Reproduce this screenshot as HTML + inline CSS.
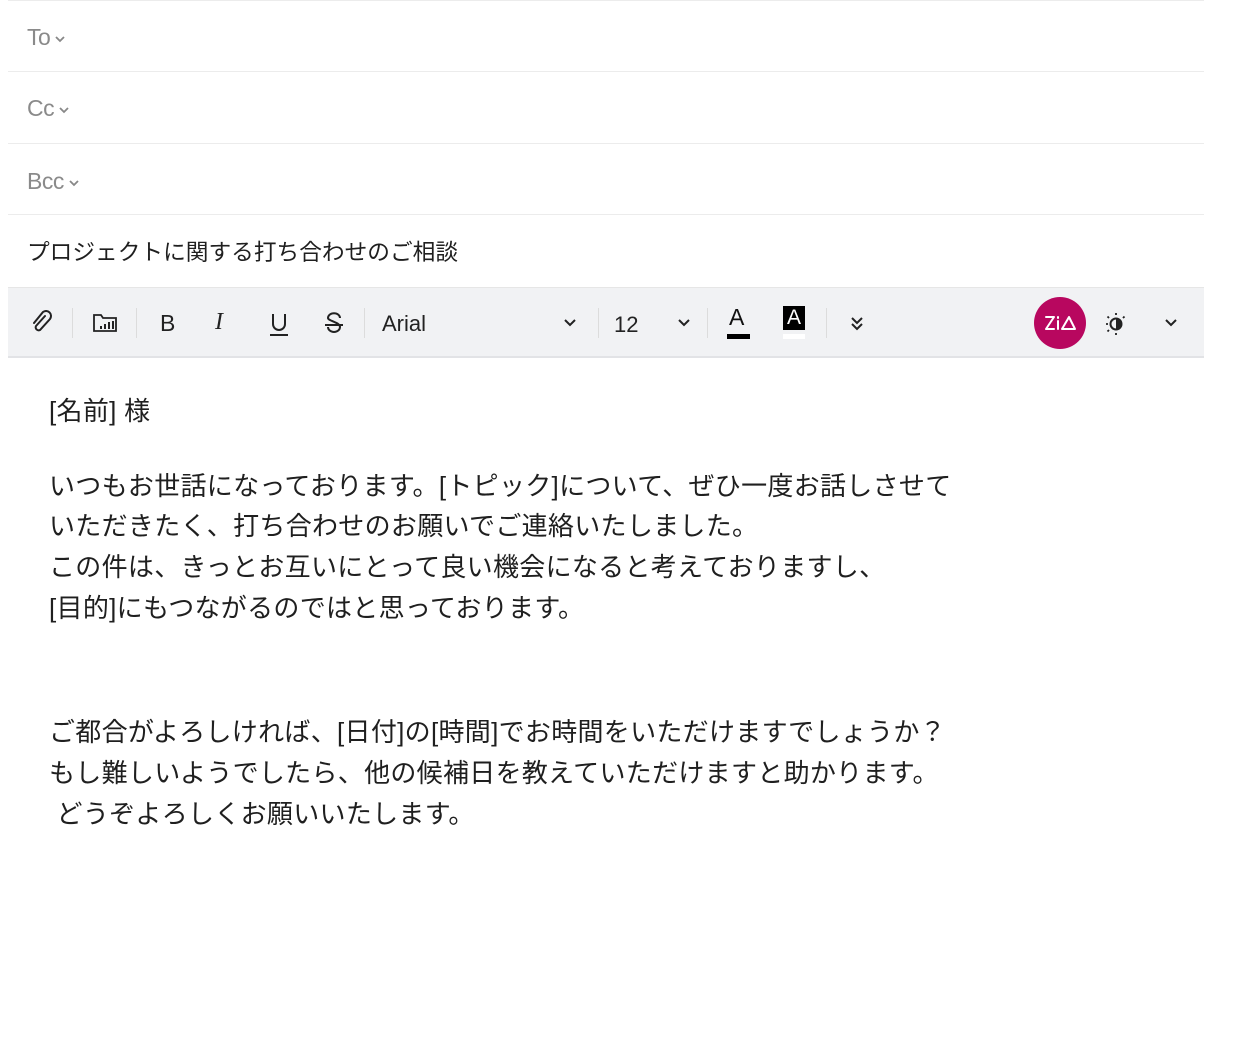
<!DOCTYPE html>
<html><head><meta charset="utf-8"><style>
*{margin:0;padding:0;box-sizing:border-box}
body{width:1236px;height:1060px;background:#fff;position:relative;overflow:hidden;font-family:"Liberation Sans","Noto Sans CJK JP",sans-serif;color:#1f1f1f}
.row{position:absolute;left:8px;width:1196px;border-top:1px solid #ececec}
.lbl{position:absolute;left:27px;font-size:23px;color:#8a8a8a;letter-spacing:-0.5px}
.lbl svg{vertical-align:middle;margin-left:4px}
.tb{position:absolute;left:8px;top:287px;width:1196px;height:71px;background:#f1f2f4;border-bottom:2px solid #e2e3e6;border-top:1px solid #e6e6e6}
.sep{position:absolute;top:20px;width:1px;height:30px;background:#dcdcdc}
.ic{position:absolute}
.t{position:absolute;left:49px;font-size:26px;white-space:nowrap;color:#1f1f1f;letter-spacing:0.3px}
</style></head><body>
<div class="row" style="top:0"></div>
<div class="lbl" style="top:24px">To<svg width="12" height="8" viewBox="0 0 12 8"><path d="M2 2l4 4 4-4" stroke="#888" stroke-width="1.8" fill="none"/></svg></div>
<div class="row" style="top:71px"></div>
<div class="lbl" style="top:95px">Cc<svg width="12" height="8" viewBox="0 0 12 8"><path d="M2 2l4 4 4-4" stroke="#888" stroke-width="1.8" fill="none"/></svg></div>
<div class="row" style="top:143px"></div>
<div class="lbl" style="top:168px">Bcc<svg width="12" height="8" viewBox="0 0 12 8"><path d="M2 2l4 4 4-4" stroke="#888" stroke-width="1.8" fill="none"/></svg></div>
<div class="row" style="top:214px"></div>
<div style="position:absolute;left:27px;top:234px;font-size:22.7px;color:#1f1f1f">プロジェクトに関する打ち合わせのご相談</div>

<div class="tb">
 <svg class="ic" style="left:22px;top:22px" width="24" height="26" viewBox="0 0 24 26"><path d="M15 6L6 16a3 3 0 0 0 4 4l10-11a5 5 0 0 0-7-7L4 13" stroke="#222" stroke-width="2" fill="none" stroke-linecap="round"/></svg>
 <div class="sep" style="left:64px"></div>
 <svg class="ic" style="left:84px;top:24px" width="26" height="22" viewBox="0 0 26 22"><path d="M2 19V3h7l2 3h13v13z" stroke="#222" stroke-width="1.8" fill="none"/><path d="M9 17v-3M13 17v-5M17 17v-7M21 17v-8" stroke="#222" stroke-width="2"/></svg>
 <div class="sep" style="left:128px"></div>
 <div class="ic" style="left:152px;top:22px;font-size:23px;color:#222">B</div>
 <div class="ic" style="left:207px;top:21px;font-size:24px;font-style:italic;font-family:'Liberation Serif',serif;color:#222">I</div>
 <svg class="ic" style="left:260px;top:24px" width="22" height="26" viewBox="0 0 22 26"><path d="M5 2v10a6 6 0 0 0 12 0V2" stroke="#222" stroke-width="2" fill="none"/><path d="M2 23h18" stroke="#222" stroke-width="2"/></svg>
 <svg class="ic" style="left:315px;top:24px" width="22" height="26" viewBox="0 0 22 26"><path d="M17 6a5 4 0 0 0-12 0c0 3 12 4 12 9a6 5 0 0 1-12 0" stroke="#222" stroke-width="2" fill="none"/><path d="M2 13h18" stroke="#222" stroke-width="2"/></svg>
 <div class="sep" style="left:356px"></div>
 <div class="ic" style="left:374px;top:23px;font-size:22px;color:#222">Arial</div>
 <svg class="ic" style="left:555px;top:30px" width="14" height="10" viewBox="0 0 14 10"><path d="M2 2l5 5 5-5" stroke="#222" stroke-width="2" fill="none"/></svg>
 <div class="sep" style="left:590px"></div>
 <div class="ic" style="left:606px;top:24px;font-size:22px;color:#222">12</div>
 <svg class="ic" style="left:669px;top:30px" width="14" height="10" viewBox="0 0 14 10"><path d="M2 2l5 5 5-5" stroke="#222" stroke-width="2" fill="none"/></svg>
 <div class="sep" style="left:699px"></div>
 <div class="ic" style="left:721px;top:16px;font-size:23px;color:#111">A</div>
 <div class="ic" style="left:719px;top:46px;width:23px;height:5px;background:#000"></div>
 <div class="ic" style="left:775px;top:18px;width:22px;height:24px;background:#000;color:#fff;font-size:21px;text-align:center;line-height:24px">A</div>
 <div class="ic" style="left:775px;top:46px;width:22px;height:5px;background:#fff"></div>
 <div class="sep" style="left:818px"></div>
 <svg class="ic" style="left:842px;top:28px" width="14" height="16" viewBox="0 0 14 16"><path d="M2 2l5 5 5-5M2 8l5 5 5-5" stroke="#222" stroke-width="2" fill="none"/></svg>
 <svg class="ic" style="left:1026px;top:9px" width="52" height="52" viewBox="0 0 52 52"><circle cx="26" cy="26" r="26" fill="#b8075f"/><path d="M12 20h8l-8 12h8M24 24v8M24 20v1M28 32l7-12 6 12z" stroke="#fff" stroke-width="2" fill="none" stroke-linejoin="round" stroke-linecap="round"/></svg>
 <svg class="ic" style="left:1096px;top:24px" width="26" height="24" viewBox="0 0 26 24"><circle cx="12" cy="12" r="5.5" stroke="#222" stroke-width="2" fill="none"/><path d="M12 6.5a5.5 5.5 0 0 1 0 11z" fill="#222"/><path d="M12 1v2M12 21v2M2 12h2M3.5 4.5l1.5 1.5M3.5 19.5l1.5-1.5M20.5 4.5l-1.5 1.5" stroke="#222" stroke-width="1.8"/></svg>
 <svg class="ic" style="left:1156px;top:30px" width="14" height="10" viewBox="0 0 14 10"><path d="M2 2l5 5 5-5" stroke="#222" stroke-width="2" fill="none"/></svg>
</div>

<div class="t" style="top:391px">[名前] 様</div>
<div class="t" style="top:466px">いつもお世話になっております。[トピック]について、ぜひ一度お話しさせて</div>
<div class="t" style="top:506px">いただきたく、打ち合わせのお願いでご連絡いたしました。</div>
<div class="t" style="top:547px">この件は、きっとお互いにとって良い機会になると考えておりますし、</div>
<div class="t" style="top:588px">[目的]にもつながるのではと思っております。</div>
<div class="t" style="top:712px">ご都合がよろしければ、[日付]の[時間]でお時間をいただけますでしょうか？</div>
<div class="t" style="top:753px">もし難しいようでしたら、他の候補日を教えていただけますと助かります。</div>
<div class="t" style="top:794px">&nbsp;どうぞよろしくお願いいたします。</div>
</body></html>
